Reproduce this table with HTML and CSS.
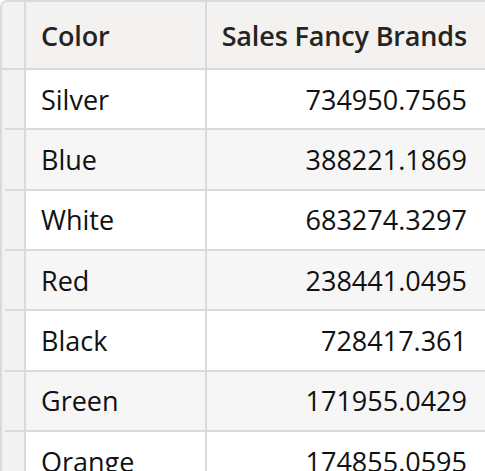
FILE: index.html
```html
<!DOCTYPE html>
<html>
<head>
<meta charset="utf-8">
<link rel="stylesheet" href="styles.css">
</head>
<body>
<div class="grid">
  <div class="row head">
    <div class="gutter"></div>
    <div class="cell c1">Color</div>
    <div class="cell c2">Sales Fancy Brands</div>
  </div>
  <div class="row odd"><div class="gutter"></div><div class="cell c1">Silver</div><div class="cell c2">734950.7565</div></div>
  <div class="row even"><div class="gutter"></div><div class="cell c1">Blue</div><div class="cell c2">388221.1869</div></div>
  <div class="row odd"><div class="gutter"></div><div class="cell c1">White</div><div class="cell c2">683274.3297</div></div>
  <div class="row even"><div class="gutter"></div><div class="cell c1">Red</div><div class="cell c2">238441.0495</div></div>
  <div class="row odd"><div class="gutter"></div><div class="cell c1">Black</div><div class="cell c2">728417.361</div></div>
  <div class="row even"><div class="gutter"></div><div class="cell c1">Green</div><div class="cell c2">171955.0429</div></div>
  <div class="row odd"><div class="gutter"></div><div class="cell c1">Orange</div><div class="cell c2">174855.0595</div></div>
</div>
</body>
</html>
```
FILE: styles.css
```css
html, body {
  margin: 0;
  padding: 0;
  background: #ffffff;
  overflow: hidden;
}
.grid {
  border-left: 2px solid #dadada;
  border-top: 2px solid #dadada;
  border-top-left-radius: 7px;
  background: #f3f2f1;
  overflow: hidden;
  font-family: "Open Sans", "Noto Sans", sans-serif;
  font-size: 27px;
  color: #111111;
  height: 480px;
}
.row {
  display: flex;
  height: 60.33px;
  box-sizing: border-box;
}
.row.head {
  height: 68px;
  font-weight: 600;
  color: #252423;
  letter-spacing: -0.15px;
  border-bottom: 2px solid #dadada;
}
.gutter {
  width: 22px;
  flex: none;
  border-right: 2px solid #dadada;
  position: relative;
}
.row:not(.head) .gutter::after {
  content: "";
  position: absolute;
  left: 3px;
  right: 0;
  bottom: 0;
  height: 2px;
  background: #dadada;
}
.cell {
  display: flex;
  align-items: center;
  box-sizing: border-box;
  white-space: nowrap;
}
.row:not(.head) .cell {
  border-bottom: 2px solid #dadada;
}
.c1 {
  width: 181px;
  flex: none;
  padding-left: 15px;
  border-right: 2px solid #dadada;
}
.c2 {
  flex: 1;
  justify-content: flex-end;
  padding-right: 18px;
}
.head .cell {
  background: #f3f2f1;
}
.odd .cell {
  background: #ffffff;
}
.even .cell {
  background: #f6f6f6;
}
```
